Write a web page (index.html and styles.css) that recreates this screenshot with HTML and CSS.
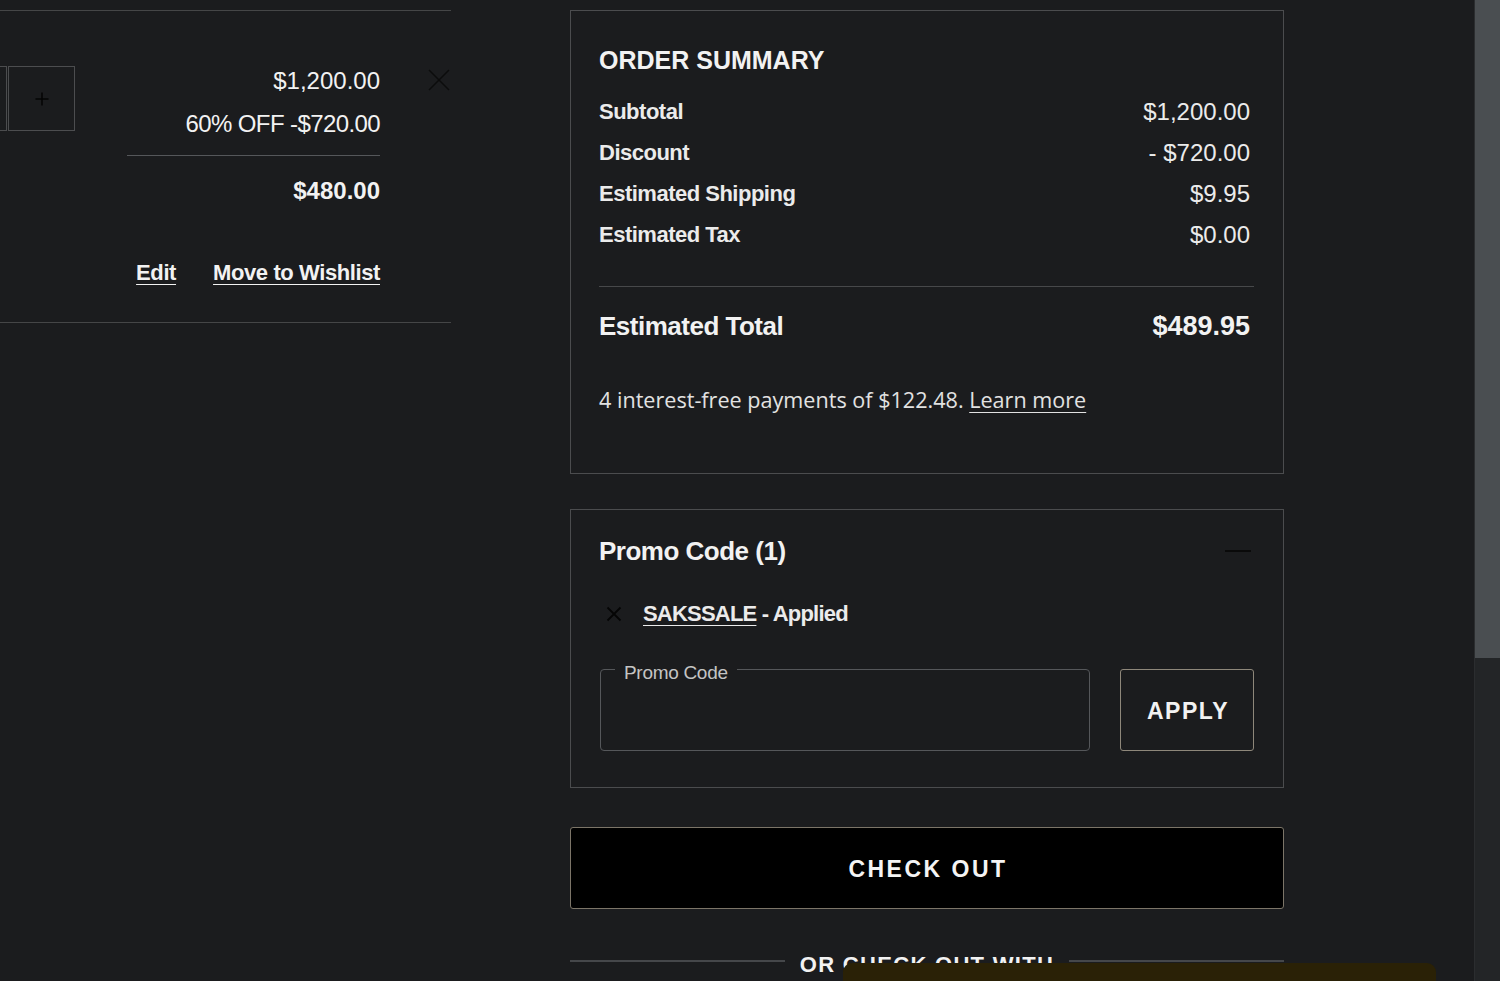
FILE: index.html
```html
<!DOCTYPE html>
<html lang="en">
<head>
<meta charset="utf-8">
<title>Shopping Bag</title>
<link rel="stylesheet" href="styles.css">
</head>
<body>
<div class="page">
  <main class="content">
    <section class="cart-col">
      <div class="cart-item">
        <div class="qty">
          <span class="qty-box qty-input"></span>
          <button class="qty-box qty-plus" aria-label="Increase quantity">
            <svg width="16" height="16" viewBox="0 0 16 16"><path d="M8 1.5V14.5M1.5 8H14.5" stroke="#050505" stroke-width="1.6" fill="none"/></svg>
          </button>
        </div>
        <div class="prices">
          <div class="price">$1,200.00</div>
          <div class="price price-off">60% OFF -$720.00</div>
          <hr class="price-rule">
          <div class="price price-final">$480.00</div>
          <div class="item-links">
            <a href="#" class="link">Edit</a>
            <a href="#" class="link">Move to Wishlist</a>
          </div>
        </div>
        <div class="remove">
          <svg width="24" height="24" viewBox="0 0 24 24"><path d="M2 2L22 22M22 2L2 22" stroke="#0c0c0c" stroke-width="1.5" fill="none"/></svg>
        </div>
      </div>
    </section>

    <aside class="summary-col">
      <div class="card summary">
        <h2 class="summary-title">ORDER SUMMARY</h2>
        <div class="row"><span class="row-label">Subtotal</span><span class="row-value">$1,200.00</span></div>
        <div class="row"><span class="row-label">Discount</span><span class="row-value">- $720.00</span></div>
        <div class="row"><span class="row-label">Estimated Shipping</span><span class="row-value">$9.95</span></div>
        <div class="row"><span class="row-label">Estimated Tax</span><span class="row-value">$0.00</span></div>
        <hr class="summary-rule">
        <div class="row total"><span class="total-label">Estimated Total</span><span class="total-value">$489.95</span></div>
        <p class="payments">4 interest-free payments of $122.48. <a href="#" class="learn">Learn more</a></p>
      </div>

      <div class="card promo">
        <div class="promo-head">
          <span class="promo-title">Promo Code (1)</span>
          <span class="minus"></span>
        </div>
        <div class="applied">
          <svg class="applied-x" width="16" height="16" viewBox="0 0 16 16"><path d="M1.5 1.5L14.5 14.5M14.5 1.5L1.5 14.5" stroke="#050505" stroke-width="1.8" fill="none"/></svg>
          <span class="applied-text"><a href="#" class="code">SAKSSALE</a> - Applied</span>
        </div>
        <div class="promo-form">
          <div class="field">
            <span class="field-label">Promo Code</span>
          </div>
          <button class="apply">APPLY</button>
        </div>
      </div>

      <button class="checkout">CHECK OUT</button>

      <div class="alt-divider">
        <span class="alt-line"></span>
        <span class="alt-text">OR CHECK OUT WITH</span>
        <span class="alt-line"></span>
      </div>
    </aside>
  </main>
  <div class="scrollbar"><div class="thumb"></div></div>
</div>
<div class="popup"></div>
</body>
</html>
```

FILE: styles.css
```css
* { box-sizing: border-box; }

html, body {
  margin: 0;
  padding: 0;
  height: 981px;
  overflow: hidden;
  background: #1b1c1e;
  color: #ececec;
  font-family: "Liberation Sans", Arial, sans-serif;
}

.page {
  display: flex;
  height: 981px;
}

.content {
  flex: 1;
  display: flex;
  gap: 119px;
  padding-top: 10px;
  overflow: hidden;
}

/* ---------- left cart column ---------- */
.cart-col {
  width: 451px;
  flex: none;
}

.cart-item {
  display: flex;
  align-items: flex-start;
  border-top: 1px solid #454647;
  border-bottom: 1px solid #454647;
  padding: 48px 0 34px 0;
}

.qty {
  display: flex;
  margin-top: 7px;
  margin-left: -54px;
  margin-right: auto;
}

.qty-box {
  display: block;
  height: 65px;
  border: 1px solid #4c4d4f;
  background: transparent;
}

.qty-input { width: 61px; }

.qty-plus {
  width: 67px;
  margin-left: 1px;
  padding: 0;
  display: flex;
  align-items: center;
  justify-content: center;
}

.prices {
  width: 253px;
  flex: none;
  text-align: right;
}

.price {
  font-size: 24px;
  line-height: 43px;
  color: #f2f2f2;
}

.price-off { letter-spacing: -0.6px; }

.price-rule {
  border: 0;
  border-top: 1px solid #55575a;
  margin: 10px 0 0 0;
  height: 0;
}

.price-final {
  font-weight: 700;
  line-height: 30px;
  margin-top: 20px;
}

.item-links {
  display: flex;
  justify-content: flex-end;
  gap: 37px;
  margin-top: 52px;
}

.link {
  color: #f2f2f2;
  font-size: 22px;
  font-weight: 700;
  letter-spacing: -0.4px;
  line-height: 30px;
  text-decoration: underline;
  text-underline-offset: 4px;
  text-decoration-thickness: 1px;
}

.remove {
  width: 71px;
  flex: none;
  display: flex;
  justify-content: flex-end;
  margin-top: 9px;
}

/* ---------- right summary column ---------- */
.summary-col {
  width: 714px;
  flex: none;
}

.card {
  border: 1px solid #4b4c4e;
  padding-left: 28px;
  padding-right: 29px;
}

.summary {
  padding-top: 34px;
  padding-bottom: 58px;
}

.summary-title {
  margin: 0 0 16px 0;
  font-size: 25px;
  line-height: 30px;
  font-weight: 700;
  color: #f2f2f2;
}

.row {
  display: flex;
  justify-content: space-between;
  align-items: center;
  height: 41px;
  padding-right: 4px;
}

.row-label {
  font-size: 22px;
  font-weight: 700;
  letter-spacing: -0.5px;
  color: #ebebeb;
}

.row-value {
  font-size: 24px;
  color: #ebebeb;
}

.summary-rule {
  border: 0;
  border-top: 1px solid #47484a;
  margin: 31px 0 0 0;
  height: 0;
}

.total {
  height: 36px;
  margin-top: 21px;
}

.total-label {
  font-size: 26px;
  font-weight: 700;
  letter-spacing: -0.5px;
  color: #f2f2f2;
}

.total-value {
  font-size: 27px;
  font-weight: 700;
  color: #f2f2f2;
}

.payments {
  margin: 41px 0 0 0;
  font-family: "Open Sans", "Noto Sans", sans-serif;
  font-size: 21.6px;
  line-height: 30px;
  color: #e2e2e2;
}

.learn {
  color: #e2e2e2;
  text-decoration: underline;
  text-underline-offset: 4px;
  text-decoration-thickness: 1px;
}

/* promo */
.promo {
  margin-top: 35px;
  padding-top: 25px;
  padding-bottom: 36px;
}

.promo-head {
  display: flex;
  justify-content: space-between;
  align-items: center;
  height: 32px;
}

.promo-title {
  font-size: 26px;
  font-weight: 700;
  letter-spacing: -0.5px;
  color: #f2f2f2;
}

.minus {
  width: 26px;
  height: 2px;
  background: #0a0a0a;
  margin-right: 3px;
}

.applied {
  display: flex;
  align-items: center;
  gap: 21px;
  height: 30px;
  margin-top: 32px;
  padding-left: 7px;
}

.applied-text {
  font-size: 22px;
  font-weight: 700;
  letter-spacing: -0.8px;
  color: #ebebeb;
}

.code {
  color: #ebebeb;
  text-decoration: underline;
  text-underline-offset: 4px;
  text-decoration-thickness: 1px;
}

.promo-form {
  display: flex;
  gap: 30px;
  margin-top: 40px;
  height: 82px;
  padding-left: 1px;
}

.field {
  position: relative;
  flex: 1;
  border: 1px solid #55575a;
  border-radius: 4px;
}

.field-label {
  position: absolute;
  left: 14px;
  top: -8px;
  padding: 0 9px;
  background: #1b1c1e;
  font-size: 19px;
  line-height: 22px;
  letter-spacing: -0.3px;
  color: #c4c4c4;
}

.apply {
  width: 134px;
  flex: none;
  background: transparent;
  border: 1px solid #8e877a;
  border-radius: 3px;
  color: #f2f2f2;
  font-family: "Liberation Sans", Arial, sans-serif;
  font-size: 23px;
  font-weight: 700;
  letter-spacing: 1.5px;
  padding: 3px 0 0 2px;
}

.checkout {
  display: block;
  width: 100%;
  height: 82px;
  margin-top: 39px;
  background: #000;
  border: 1px solid #7c7568;
  border-radius: 3px;
  color: #f4f4f4;
  font-family: "Liberation Sans", Arial, sans-serif;
  font-size: 23px;
  font-weight: 700;
  letter-spacing: 2.5px;
  padding: 3px 0 0 2px;
}

.alt-divider {
  display: flex;
  align-items: flex-start;
  margin-top: 39px;
}

.alt-line {
  flex: 1;
  height: 2px;
  margin-top: 12px;
  background: #45474a;
}

.alt-text {
  margin: 0 15px;
  padding-top: 4px;
  font-size: 22px;
  line-height: 26px;
  font-weight: 700;
  letter-spacing: 1.3px;
  color: #f2f2f2;
  white-space: nowrap;
}

/* scrollbar */
.scrollbar {
  width: 26px;
  flex: none;
  height: 981px;
  background: #232527;
  border-left: 1px solid #2b2d2f;
}

.thumb {
  height: 658px;
  background: #4a4e51;
}

/* bottom popup overlay */
.popup {
  position: fixed;
  left: 843px;
  top: 963px;
  width: 593px;
  height: 40px;
  background: #2a2106;
  border-radius: 9px 9px 0 0;
}
```
